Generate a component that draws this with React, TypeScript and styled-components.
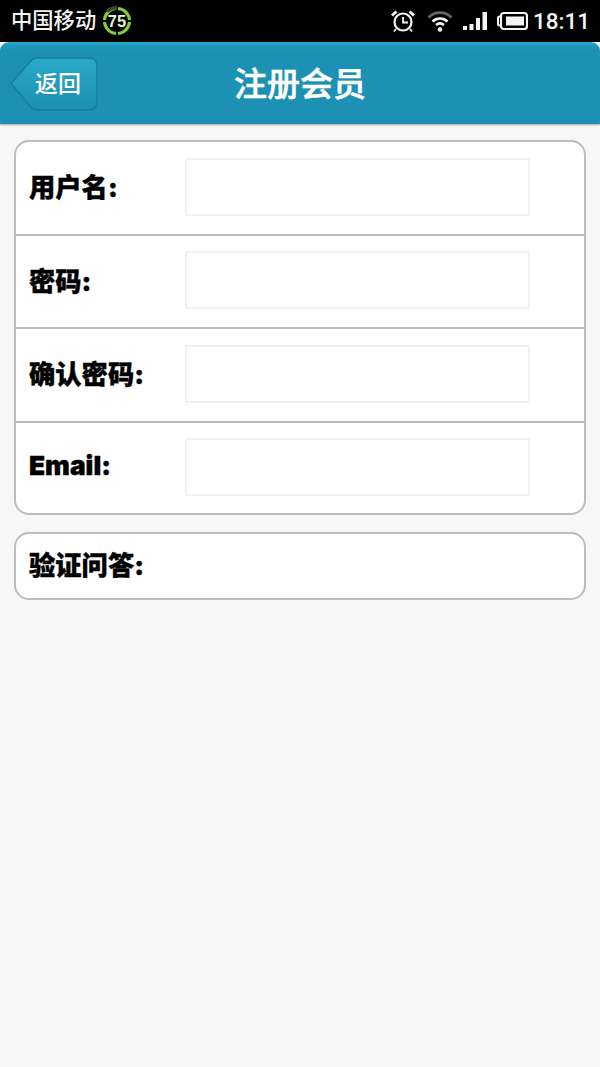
import styled, { createGlobalStyle } from "styled-components";

const GlobalStyle = createGlobalStyle`
  html, body {
    margin: 0;
    padding: 0;
    background: #f7f7f7;
  }
  * {
    box-sizing: border-box;
  }
`;

const Page = styled.div`
  width: 600px;
  height: 1067px;
  background: #f7f7f7;
  font-family: "Liberation Sans", "Noto Sans CJK SC", sans-serif;
  overflow: hidden;
`;

const StatusBar = styled.div`
  height: 42px;
  background: #000;
  color: #f4f4f4;
  display: flex;
  align-items: center;
  padding: 0 10px 0 11px;
`;

const Carrier = styled.span`
  font-family: "Noto Sans CJK SC", sans-serif;
  font-size: 21.3px;
  font-weight: 500;
  line-height: 42px;
  margin-right: 6px;
  margin-top: -4px;
`;

const StatusRight = styled.div`
  margin-left: auto;
  display: flex;
  align-items: center;
`;

const Clock = styled.span`
  font-family: "Roboto", sans-serif;
  font-size: 22.5px;
  font-weight: 500;
  margin-left: 5px;
`;

const Glyph = styled.svg<{ $gap?: number }>`
  display: block;
  margin-right: ${(p) => p.$gap ?? 0}px;
`;

const Header = styled.header`
  height: 82px;
  background: linear-gradient(#25afcf 0, #1f9ac0 3px, #1c91b4 8px, #1c91b4 100%);
  border-radius: 9px 9px 0 0;
  box-shadow: 0 1px 2px rgba(0, 0, 0, 0.35);
  display: flex;
  align-items: center;
  justify-content: center;
  position: relative;
`;

const BackButton = styled.div`
  position: absolute;
  left: 10px;
  top: 15px;
  width: 88px;
  height: 54px;
`;

const BackShape = styled.svg`
  position: absolute;
  inset: 0;
`;

const BackLabel = styled.span`
  position: absolute;
  left: 25px;
  top: -1px;
  line-height: 52px;
  font-family: "Noto Sans CJK SC", sans-serif;
  font-size: 23px;
  font-weight: 500;
  color: #fff;
`;

const Title = styled.h1`
  margin: 0;
  font-family: "Noto Sans CJK SC", sans-serif;
  font-size: 33px;
  font-weight: 500;
  color: #fff;
  margin-top: -3px;
  -webkit-text-stroke: 0.5px #fff;
`;

const Content = styled.main`
  padding: 16px 14px 0;
  display: flex;
  flex-direction: column;
  gap: 17px;
`;

const Card = styled.section`
  background: #fff;
  border: 2px solid #bcbcbc;
  border-radius: 15px;
  overflow: hidden;
`;

const Row = styled.div<{ $height: number }>`
  height: ${(p) => p.$height}px;
  display: flex;
  align-items: center;
  padding-left: 13px;
  & + & {
    border-top: 2px solid #bcbcbc;
  }
`;

const Label = styled.label`
  width: 156px;
  flex: none;
  font-family: "Inter", "Noto Sans CJK SC", sans-serif;
  font-size: 26.3px;
  font-weight: 900;
  color: #000;
  white-space: nowrap;
  margin-top: -4px;
  -webkit-text-stroke: 0.4px #000;
`;

const Input = styled.input`
  width: 345px;
  height: 58px;
  padding: 0;
  margin-top: -2px;
  background: #fff;
  border: 2px solid #f1f1f1;
  outline: none;
`;

const rows = [
  { text: "用户名:", height: 91.5 },
  { text: "密码:", height: 93.5 },
  { text: "确认密码:", height: 93.5 },
  { text: "Email:", height: 92.5 },
];

const App = () => (
  <Page>
    <GlobalStyle />
    <StatusBar>
      <Carrier>中国移动</Carrier>
      <svg width="30" height="30" viewBox="0 0 30 30">
        <circle cx="15" cy="15" r="12.5" fill="none" stroke="#7fd030" strokeWidth="3.2" />
        <path d="M15 1v4M15 25v4M1 15h4M25 15h4" stroke="#000" strokeWidth="2" />
        <path d="M5 5.500A13 13 0 0 1 15 2" fill="none" stroke="#3a4a2a" strokeWidth="3.200" />
        <text x="15" y="21" textAnchor="middle" fontSize="16.500" fontWeight="700" fill="#e3f2d0" fontFamily="Liberation Sans">75</text>
      </svg>
      <StatusRight>
        <Glyph width="26" height="24" viewBox="0 0 26 24" $gap={11}>
          <circle cx="13" cy="13" r="8.500" fill="none" stroke="#f4f4f4" strokeWidth="2.200" />
          <path d="M13 8v5.500h5" fill="none" stroke="#f4f4f4" strokeWidth="1.800" />
          <path d="M2 6.500 6.500 2.500M24 6.500 19.500 2.500" stroke="#f4f4f4" strokeWidth="3" />
          <path d="M6 20l-2 2.500M20 20l2 2.500" stroke="#f4f4f4" strokeWidth="1.800" />
        </Glyph>
        <Glyph width="26" height="22" viewBox="0 0 26 22" $gap={9}>
          <path d="M1.500 7.500C8 1 18 1 24.500 7.500" fill="none" stroke="#666" strokeWidth="2.600" />
          <path d="M5.500 11.500C10 7.500 16 7.500 20.500 11.500" fill="none" stroke="#f4f4f4" strokeWidth="2.600" />
          <path d="M9 15c2.500-2 5.500-2 8 0" fill="none" stroke="#f4f4f4" strokeWidth="2.600" />
          <circle cx="13" cy="19.500" r="2.300" fill="#f4f4f4" />
        </Glyph>
        <Glyph width="26" height="20" viewBox="0 0 26 20" $gap={9}>
          <rect x="1" y="15" width="4" height="4" fill="#f4f4f4" />
          <rect x="7.500" y="13" width="4" height="6" fill="#f4f4f4" />
          <rect x="14" y="7" width="4" height="12" fill="#f4f4f4" />
          <rect x="20.500" y="1" width="4.500" height="18" fill="#f4f4f4" />
        </Glyph>
        <Glyph width="31" height="20" viewBox="0 0 31 20">
          <path d="M4 5.500H2.500A1.500 1.500 0 0 0 1 7v6a1.500 1.500 0 0 0 1.500 1.500H4" fill="none" stroke="#f4f4f4" strokeWidth="2" />
          <rect x="4" y="2" width="26" height="16" rx="3" fill="none" stroke="#f4f4f4" strokeWidth="2.200" />
          <rect x="9" y="5.500" width="18" height="9" fill="#f4f4f4" />
        </Glyph>
        <Clock>18:11</Clock>
      </StatusRight>
    </StatusBar>
    <Header>
      <BackButton>
        <BackShape width="88" height="54" viewBox="0 0 88 54">
          <defs>
            <linearGradient id="backFill" x1="0" y1="0" x2="0" y2="1">
              <stop offset="0" stopColor="#2ba9c9" />
              <stop offset="1" stopColor="#1c8fb1" />
            </linearGradient>
          </defs>
          <path
            d="M1 26.500 20 5Q23 1 28 1H79Q87 1 87 9V45Q87 53 79 53H28Q23 53 20 49Z"
            fill="url(#backFill)"
            stroke="#177f9e"
            strokeWidth="1.500"
          />
        </BackShape>
        <BackLabel>返回</BackLabel>
      </BackButton>
      <Title>注册会员</Title>
    </Header>
    <Content>
      <Card>
        {rows.map((row) => (
          <Row key={row.text} $height={row.height}>
            <Label>{row.text}</Label>
            <Input />
          </Row>
        ))}
      </Card>
      <Card>
        <Row $height={63.5}>
          <Label>验证问答:</Label>
        </Row>
      </Card>
    </Content>
  </Page>
);

export default App;
